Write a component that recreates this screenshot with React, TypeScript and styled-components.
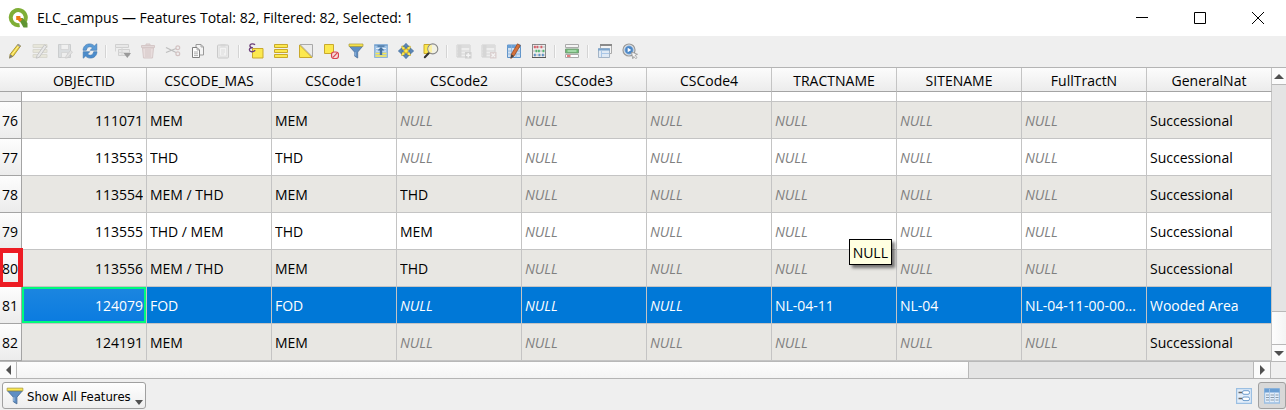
import React from "react";
import styled, { createGlobalStyle, css } from "styled-components";

const GlobalStyle = createGlobalStyle`
  *, *::before, *::after { box-sizing: border-box; }
  html, body { margin: 0; padding: 0; background: #efefef; }
  body { font-family: "Open Sans", "Noto Sans", sans-serif; font-size: 14px; color: #000; }
`;

const Window = styled.div`
  display: flex;
  flex-direction: column;
  min-height: 100vh;
  background: #efefef;
`;

const TitleBar = styled.header`
  display: flex;
  align-items: center;
  height: 36px;
  padding-left: 8px;
  background: #fff;
`;

const Title = styled.h1`
  flex: 1;
  margin: 0 0 0 9px;
  font-size: 14px;
  line-height: 20px;
  font-weight: 400;
  white-space: nowrap;
`;

const WindowControls = styled.div`
  display: flex;
`;

const WindowButton = styled.button`
  display: flex;
  align-items: center;
  justify-content: center;
  width: 58px;
  height: 34px;
  padding: 0 0 0 2px;
  border: 0;
  background: transparent;
`;

const Toolbar = styled.div`
  display: flex;
  align-items: center;
  height: 31px;
  padding: 0 0 1px 2px;
`;

const ToolButton = styled.button`
  display: flex;
  align-items: center;
  justify-content: center;
  width: 25px;
  height: 24px;
  padding: 0;
  border: 0;
  background: transparent;
  &:disabled svg { opacity: 0.35; }
`;

const Separator = styled.span`
  width: 8px;
  height: 13px;
  border-left: 3px solid transparent;
  background: linear-gradient(90deg, #d4d4d4 1px, #fafafa 1px, #fafafa 2px, transparent 2px) no-repeat;
  background-origin: padding-box;
  background-clip: padding-box;
`;

const Body = styled.div`
  display: flex;
  border-top: 1px solid #b4b4b4;
`;

const TableView = styled.div`
  flex: 1;
  min-width: 0;
  overflow: hidden;
`;

const Table = styled.table`
  width: 100%;
  table-layout: fixed;
  border-collapse: separate;
  border-spacing: 0;
  background: #fff;
`;

const NumberCol = styled.col`
  width: 22px;
`;

const HeadCell = styled.th`
  height: 24px;
  padding: 2px 0 0;
  border-right: 1px solid #c4c4c4;
  border-bottom: 1px solid #a4a4a4;
  background: linear-gradient(#fcfcfc, #ececec);
  font-weight: 400;
  line-height: 20px;
  text-align: center;
`;

const CornerCell = styled.td`
  padding: 0;
  border-bottom: 1px solid #a4a4a4;
  background: linear-gradient(#fcfcfc, #ececec);
`;

const RowHead = styled.th<{ $partial?: boolean }>`
  position: relative;
  height: ${(p) => (p.$partial ? 10 : 37)}px;
  padding: 2px 0 0 2px;
  border-right: 1px solid #a4a4a4;
  border-bottom: 1px solid #a4a4a4;
  background: ${(p) => (p.$partial ? "#ededed" : "linear-gradient(#fdfdfd, #ececec)")};
  color: #000;
  font-weight: 400;
  line-height: 20px;
  text-align: left;
`;

const RowNumber = styled.span`
  position: relative;
  z-index: 2;
`;

const RowMark = styled.span`
  position: absolute;
  inset: -2px -2px -1px 0;
  z-index: 1;
  border: 5px solid #ed1c24;
  border-left-width: 3px;
`;

const Cell = styled.td<{ $numeric?: boolean; $current?: boolean }>`
  position: relative;
  padding: 2px 3px 0;
  border-right: 1px solid #c4c4c4;
  border-bottom: 1px solid #c4c4c4;
  line-height: 20px;
  text-align: ${(p) => (p.$numeric ? "right" : "left")};
  ${(p) =>
    p.$current &&
    css`
      background: linear-gradient(#1c86e0, #0a7be0);
      box-shadow: inset 0 0 0 2px #00fa7c;
    `}
`;

const CellText = styled.span<{ $null?: boolean }>`
  display: block;
  overflow: hidden;
  white-space: nowrap;
  ${(p) =>
    p.$null &&
    css`
      color: #808080;
      font-style: italic;
    `}
`;

const Row = styled.tr<{ $shade?: boolean; $selected?: boolean }>`
  background: ${(p) => (p.$selected ? "#0078d7" : p.$shade ? "#e8e7e3" : "#fff")};
  ${(p) =>
    p.$selected &&
    css`
      ${CellText} { color: #fff; }
    `}
`;

const Tooltip = styled.span`
  position: absolute;
  top: 26px;
  right: 4px;
  z-index: 2;
  padding: 3px 3px 1px;
  border: 1px solid #000;
  background: #ffffe1;
  box-shadow: 3px 3px 3px rgba(0, 0, 0, 0.5);
`;

const VerticalBar = styled.div`
  display: flex;
  flex-direction: column;
  width: 14px;
  background: #e4e4e4;
`;

const HorizontalBar = styled.div`
  display: flex;
  height: 18px;
  padding-right: 15px;
  border-top: 1px solid #b8b8b8;
  border-bottom: 1px solid #b4b4b4;
`;

const Arrow = styled.button<{ $vertical?: boolean }>`
  display: flex;
  align-items: center;
  justify-content: center;
  flex: none;
  padding: 0;
  border: 0 solid #b8b8b8;
  background: #fbfbfb;
  ${(p) =>
    p.$vertical
      ? css`
          width: 14px;
          height: 17px;
          &:first-child { border-bottom-width: 1px; }
          &:last-child { border-top-width: 1px; }
        `
      : css`
          width: 17px;
          height: 16px;
          &:first-child { border-right-width: 1px; }
          &:last-child { border-left-width: 1px; border-right-width: 1px; width: 18px; }
        `}
`;

const Track = styled.div<{ $vertical?: boolean }>`
  display: flex;
  flex: 1;
  flex-direction: ${(p) => (p.$vertical ? "column" : "row")};
  justify-content: ${(p) => (p.$vertical ? "flex-end" : "flex-start")};
  background: #e4e4e4;
`;

const VerticalThumb = styled.div`
  height: 33px;
  border-top: 1px solid #b8b8b8;
  background: linear-gradient(90deg, #fdfdfd, #f4f4f4);
`;

const HorizontalThumb = styled.div`
  width: 77%;
  border-right: 1px solid #b8b8b8;
  background: linear-gradient(#fdfdfd, #f4f4f4);
`;

const Footer = styled.footer`
  display: flex;
  align-items: center;
  justify-content: space-between;
  padding: 3px 0 1px 2px;
`;

const FilterButton = styled.button`
  display: flex;
  align-items: center;
  gap: 3px;
  width: 144px;
  height: 27px;
  padding: 0 2px 0 3px;
  border: 1px solid #a0a0a0;
  border-radius: 3px;
  background: linear-gradient(#fefefe, #eeeeee);
  color: #000;
  font-family: "DejaVu Sans Condensed", "DejaVu Sans", sans-serif;
  font-size: 13px;
  line-height: 16px;
  white-space: nowrap;
`;

const FilterLabel = styled.span`
  padding-top: 2px;
`;

const MenuMark = styled.svg`
  align-self: flex-end;
  margin: 0 0 3px auto;
  flex: none;
`;

const ViewSwitch = styled.div`
  display: flex;
`;

const ViewButton = styled.button<{ $active?: boolean }>`
  display: flex;
  align-items: center;
  justify-content: center;
  width: 28px;
  height: 27px;
  padding: 0;
  border: 1px solid ${(p) => (p.$active ? "#a0a0a0" : "transparent")};
  border-radius: 3px;
  background: ${(p) => (p.$active ? "#d8d8d8" : "transparent")};
`;

const Icon = ({ children, size = 16 }: { children: React.ReactNode; size?: number }) => (
  <svg width={size} height={size} viewBox="0 0 16 16" fill="none" aria-hidden="true">
    {children}
  </svg>
);

const Funnel = () => (
  <>
    <path d="M1.500 3.500h13L9.700 9v6l-3.200-2V9z" fill="#5f8fc4" stroke="#4b6e99" strokeWidth="0.800" />
    <path d="M7 9.200v3.500" stroke="#a9c6e6" />
    <path d="M1 1h14v2.400H1z" fill="#fce94f" stroke="#a8993c" strokeWidth="0.700" />
  </>
);

const Trio = () => (
  <path d="M1 1.500h14v3H1zM1 6.500h14v3H1zM1 11.500h14v3H1z" fill="#d9d6b4" stroke="#b5b29a" />
);

const SheetTable = () => (
  <>
    <path d="M1 2h13v12H1z" fill="#eee" stroke="#9a9a9a" />
    <path d="M1 2h13v3H1z" fill="#bbb" />
    <path d="M5 2v12M1 8h13M1 11h13" stroke="#aaa" />
    <path d="M2 2h3v12H2z" fill="#aaa" />
  </>
);

type Tool = { label: string; off?: boolean; art: React.ReactNode };

const toolGroups: Tool[][] = [
  [
    {
      label: "Toggle editing mode",
      art: (
        <>
          <path d="M3.200 11.200 11 1.200l2.600 1.800-7.400 10.200-3.600 1.900z" fill="#f0d742" stroke="#9a8426" strokeWidth="0.800" />
          <path d="M4.600 12.200 12.200 2.200" stroke="#fff3a0" />
          <path d="m10.600 1.600 2.800 2" stroke="#9c9c9c" strokeWidth="1.800" />
          <path d="m3.100 11.200-.9 4.300 3.900-2.200z" fill="#7d7d7d" />
        </>
      ),
    },
    {
      label: "Toggle multi edit mode",
      off: true,
      art: (
        <>
          <Trio />
          <path d="m5 12.600 7.500-10.800 2.200 1.600L7.300 14.200l-3 1z" fill="#ddd" stroke="#777" />
        </>
      ),
    },
    {
      label: "Save edits",
      off: true,
      art: (
        <>
          <path d="M1.500 1.500h12v13h-12z" fill="#b4bcc4" stroke="#8b8f93" />
          <path d="M4 1.500h7.500v5H4z" fill="#f4f4f4" stroke="#999" strokeWidth="0.700" />
          <path d="M4.500 9.500h6v5h-6z" fill="#eee" stroke="#999" strokeWidth="0.700" />
          <path d="m9 13 4.500-5.500 2 1.500-4.500 5.500-2.300.7z" fill="#ccc" stroke="#888" strokeWidth="0.700" />
        </>
      ),
    },
    {
      label: "Reload the table",
      art: (
        <>
          <path d="M1 7.300C1.300 3.200 4 .900 7.600.900c2 0 3.600.8 4.700 2L14.800.800v6.500H8.200l2.300-2.400C8.500 2.900 4.800 3.500 4.300 7.300z" fill="#5a9bd6" stroke="#3a72ad" strokeWidth="0.600" />
          <path d="M15 8.700c-.3 4.100-3 6.400-6.600 6.400-2 0-3.600-.8-4.700-2l-2.500 2.100V8.700h6.600l-2.300 2.400c2 2 5.700 1.400 6.200-2.400z" fill="#4b8ccc" stroke="#3a72ad" strokeWidth="0.600" />
        </>
      ),
    },
  ],
  [
    {
      label: "Add feature",
      off: true,
      art: (
        <>
          <path d="M.5 1.500h13v3H.5zM3.500 6.500h11v6h-11z" fill="#ddd" stroke="#999" />
          <path d="M3.500 9.500h11M7 4.500v8M.5 4.500v4" stroke="#aaa" />
          <path d="M8.500 10H16l-3.700 5z" fill="#000" />
        </>
      ),
    },
    {
      label: "Delete selected features",
      off: true,
      art: (
        <>
          <path d="M2.500 5h11l-1 10h-9z" fill="#dcbcbc" stroke="#a78080" />
          <path d="M1.500 2.500h13v2h-13zM6 2.300V1h4v1.300" fill="#cbb0b0" stroke="#a78080" />
          <path d="M6 6v8M8 6v8M10 6v8" stroke="#a78080" />
        </>
      ),
    },
    {
      label: "Cut",
      off: true,
      art: (
        <>
          <path d="m1 4.500 10 5M1 9.500l10-4" stroke="#666" strokeWidth="1.300" />
          <circle cx="12.800" cy="4.800" r="1.900" stroke="#a07070" strokeWidth="1.200" />
          <circle cx="12.800" cy="10.800" r="1.900" stroke="#a07070" strokeWidth="1.200" />
        </>
      ),
    },
    {
      label: "Copy",
      art: (
        <>
          <path d="M6 1.500h5l2.500 2.500v8H6z" fill="#f4f4f4" stroke="#9a9a9a" />
          <path d="M2.500 4.500h4.500l2.500 2.500v7.500h-7z" fill="#fff" stroke="#808080" />
          <path d="M7 4.500V7h2.500M4 9h4M4 10.800h4M4 12.600h4M11 1.500V4h2.500" stroke="#9a9a9a" strokeWidth="0.800" />
        </>
      ),
    },
    {
      label: "Paste",
      off: true,
      art: (
        <>
          <rect x="2.500" y="2" width="11" height="13" rx="1" fill="#ddd" stroke="#888" />
          <path d="M4.500 4.500h7v8.500h-7z" fill="#fafafa" stroke="#bbb" strokeWidth="0.600" />
          <path d="M5.500 1h5v2.500h-5z" fill="#aaa" />
          <path d="M6 7h4M6 9h4M6 11h3" stroke="#bbb" />
        </>
      ),
    },
  ],
  [
    {
      label: "Select features using an expression",
      art: (
        <>
          <path d="M4.500 5.500h10.500V15H4.500z" fill="#fce94f" stroke="#c9a92c" />
          <path d="M7 1.800C5.500.200 1.800.500 1.900 2.700c0 1.300 1.400 1.900 3 1.900C2.800 4.600 1.200 5.300 1.400 7c.3 2.300 4 2.300 5.800.3" stroke="#6b3c78" strokeWidth="1.300" />
        </>
      ),
    },
    {
      label: "Select all",
      art: <path d="M1.500 1.500h13v3h-13zM1.500 6.500h13v3h-13zM1.500 11.500h13v3h-13z" fill="#fce94f" stroke="#c9a92c" />,
    },
    {
      label: "Invert selection",
      art: (
        <>
          <path d="M2 1.500h12.500V14z" fill="#ececec" stroke="#a9a9a9" />
          <path d="M1.500 2v12.500H14z" fill="#fce94f" stroke="#c9a92c" />
        </>
      ),
    },
    {
      label: "Deselect all features",
      art: (
        <>
          <path d="M1.500 1.500h9v9h-9z" fill="#fce94f" stroke="#c9a92c" />
          <rect x="8.500" y="9" width="7" height="6.500" rx="2.500" fill="#f7dada" stroke="#d8434e" strokeWidth="1.200" />
          <path d="m10 14.300 4-4.200" stroke="#d8434e" strokeWidth="1.200" />
        </>
      ),
    },
    { label: "Filter features using form", art: <Funnel /> },
    {
      label: "Move selection to top",
      art: (
        <>
          <path d="M1.500 1.500h13v13h-13z" fill="#9ec2e6" stroke="#8fb4da" />
          <path d="M1.500 2.500h13" stroke="#7ba4cd" />
          <path d="M2.500 10.500h11M2.500 13h11" stroke="#fce94f" strokeWidth="1.600" />
          <path d="M3 5.500h10M3 8h10" stroke="#e6f0fa" />
          <path d="M4.500 2.500h7v1.300h-7zM8 4l3.500 3.500H9.200V12H6.800V7.500H4.500z" fill="#44709f" />
        </>
      ),
    },
    {
      label: "Pan map to the selected rows",
      art: (
        <>
          <path d="M3.800 3h3.500v3.500H3.800zM9 3.200h3.300v3.300H9zM3.500 9h3.300v3.500H3.500zM9.300 9.300h3.200v3.200H9.300zM6 6h4v4H6z" fill="#fce94f" stroke="#c9a92c" strokeWidth="0.700" />
          <path d="m8 .3 3 3.300H9v1.600H7V3.600H5zM8 15.700l3-3.300H9v-1.600H7v1.600H5zM.3 8l3.300-3v2h1.600v2H3.600v2zM15.700 8l-3.300-3v2h-1.600v2h1.600v2z" fill="#5b87b8" stroke="#3f6998" strokeWidth="0.600" />
        </>
      ),
    },
    {
      label: "Zoom map to the selected rows",
      art: (
        <>
          <path d="M1 1.500h7v9H1z" fill="#fce94f" stroke="#c9a92c" />
          <path d="M5.600 10.200 1.800 14.300" stroke="#333" strokeWidth="2" strokeLinecap="round" />
          <circle cx="9.800" cy="5.900" r="5" fill="#f1f1e4" stroke="#888" strokeWidth="1.100" />
          <path d="M5.500 5.500a4.200 4.200 0 0 0 3.400 4.300V1.800a4.300 4.300 0 0 0-3.400 3.700z" fill="#fbf0a0" />
        </>
      ),
    },
  ],
  [
    {
      label: "New field",
      off: true,
      art: (
        <>
          <SheetTable />
          <rect x="9" y="9" width="6.500" height="6.500" fill="#999" />
          <path d="M12.200 10v4.500M10 12.200h4.500" stroke="#fff" strokeWidth="1.400" />
        </>
      ),
    },
    {
      label: "Delete field",
      off: true,
      art: (
        <>
          <SheetTable />
          <rect x="9" y="9" width="6.500" height="6.500" fill="#b89a9a" />
          <path d="m10.500 10.500 3.500 3.500M14 10.500 10.500 14" stroke="#fff" strokeWidth="1.300" />
        </>
      ),
    },
    {
      label: "Organize columns",
      art: (
        <>
          <path d="M1.500 2h13v12.500h-13z" fill="#cfe0f2" stroke="#5f93c8" />
          <path d="M1.500 2h13v3h-13z" fill="#6ba0d6" />
          <path d="M5.500 2v12.500M10 2v12.500M1.500 8h13M1.500 11h13" stroke="#86b0dc" strokeWidth="0.800" />
          <path d="m5.300 11.300 6.200-10.500 2.800 1.700-6.200 10.400-3.300 2.600z" fill="#d5713a" stroke="#8c4420" strokeWidth="0.700" />
          <path d="m5.200 11.300-.4 4 3.300-2.400z" fill="#444" />
        </>
      ),
    },
    {
      label: "Open field calculator",
      art: (
        <>
          <path d="M1.500 1v14M14.500 1v14M1.500 1.500h13" stroke="#888" />
          <path d="M1.500 4h13M1.500 8h13M1.500 12h13" stroke="#aaa" strokeWidth="0.800" />
          <path d="M3 4h1.800M5.500 4h1.800M9.500 4h1.800" stroke="#d9606a" strokeWidth="2.400" />
          <path d="M4.500 8h1.800M7 8h1.800M11.500 8h1.800" stroke="#55b873" strokeWidth="2.400" />
          <path d="M3 12h1.800M7.500 12h1.800M11 12h1.800" stroke="#5f93c8" strokeWidth="2.400" />
          <path d="M1 14.500h14" stroke="#555" />
        </>
      ),
    },
  ],
  [
    {
      label: "Conditional formatting",
      art: (
        <>
          <path d="M1.500 1.500h13v3h-13z" fill="#f4f4f4" stroke="#aaa" />
          <path d="M1.500 6h13v4h-13z" fill="#6dbb73" stroke="#7a9c7d" />
          <path d="M3.500 8h9" stroke="#b4e2b8" strokeWidth="1.500" />
          <path d="M1.500 11.500h13v3h-13z" fill="#fff" stroke="#aaa" />
          <path d="M3 13h3.500" stroke="#d23b3b" strokeWidth="1.300" />
        </>
      ),
    },
  ],
  [
    {
      label: "Dock attribute table",
      art: (
        <>
          <path d="M3.500 1.500h11v9h-11z" fill="#f4f4f4" stroke="#aaa" />
          <path d="M3 2h12" stroke="#8a8a8a" strokeWidth="2" />
          <path d="M1.500 5.500h11v9h-11z" fill="#dfe9f4" stroke="#a3b4c6" />
          <path d="M1 6.500h12" stroke="#7ba4cd" strokeWidth="2" />
          <path d="M4.500 8v6M5 10.500h7" stroke="#a9c6e6" />
        </>
      ),
    },
    {
      label: "Actions",
      art: (
        <>
          <circle cx="7" cy="7" r="6" fill="#e6e6e6" stroke="#9a9a9a" strokeWidth="1.200" />
          <circle cx="7" cy="7" r="4.300" fill="#4c87c6" stroke="#a9c6e6" strokeWidth="0.800" />
          <path d="m5.700 4.800 3.600 2.200-3.600 2.200z" fill="#fff" />
          <path d="m9.500 9 6 2.300-2.500 1 2 2.200-1.200 1.200-2-2.200-1 2.200z" fill="#f8f8f8" stroke="#888" strokeWidth="0.700" />
        </>
      ),
    },
  ],
];

const columns = [
  "OBJECTID",
  "CSCODE_MAS",
  "CSCode1",
  "CSCode2",
  "CSCode3",
  "CSCode4",
  "TRACTNAME",
  "SITENAME",
  "FullTractN",
  "GeneralNat",
];

type Feature = { n: number; values: (string | null)[]; selected?: boolean; marked?: boolean; tip?: number };

const blank = (count: number): null[] => Array(count).fill(null);

const features: Feature[] = [
  { n: 76, values: ["111071", "MEM", "MEM", ...blank(6), "Successional"] },
  { n: 77, values: ["113553", "THD", "THD", ...blank(6), "Successional"] },
  { n: 78, values: ["113554", "MEM / THD", "MEM", "THD", ...blank(5), "Successional"] },
  { n: 79, values: ["113555", "THD / MEM", "THD", "MEM", ...blank(5), "Successional"], tip: 6 },
  { n: 80, values: ["113556", "MEM / THD", "MEM", "THD", ...blank(5), "Successional"], marked: true },
  {
    n: 81,
    values: ["124079", "FOD", "FOD", ...blank(3), "NL-04-11", "NL-04", "NL-04-11-00-00...", "Wooded Area"],
    selected: true,
  },
  { n: 82, values: ["124191", "MEM", "MEM", ...blank(6), "Successional"] },
];

const Triangle = ({ d, w, h }: { d: string; w: number; h: number }) => (
  <svg width={w} height={h} viewBox={`0 0 ${w} ${h}`} aria-hidden="true">
    <path d={d} fill="#505050" />
  </svg>
);

export default function App() {
  return (
    <Window>
      <GlobalStyle />
      <TitleBar>
        <svg width="20" height="20" viewBox="0 0 20 20" fill="none" aria-hidden="true">
          <path d="M16.200 14.200A7.500 7.500 0 1 0 11.600 17" stroke="#7fae36" strokeWidth="4" />
          <path d="m10 10 4.500 0 5 5v4.500h-4z" fill="#5f9432" />
          <path d="M8.200 8h4.200v1.400l2 2-2.600 2.600-2-2H8.200z" fill="#ee7913" />
        </svg>
        <Title>ELC_campus — Features Total: 82, Filtered: 82, Selected: 1</Title>
        <WindowControls>
          <WindowButton aria-label="Minimize">
            <svg width="12" height="12" viewBox="0 0 12 12"><path d="M0 5.500h12" stroke="#000" /></svg>
          </WindowButton>
          <WindowButton aria-label="Maximize">
            <svg width="12" height="12" viewBox="0 0 12 12"><path d="M.5.5h11v11H.5z" fill="none" stroke="#000" /></svg>
          </WindowButton>
          <WindowButton aria-label="Close">
            <svg width="12" height="12" viewBox="0 0 12 12"><path d="m0 0 12 12M12 0 0 12" stroke="#000" /></svg>
          </WindowButton>
        </WindowControls>
      </TitleBar>

      <Toolbar role="toolbar" aria-label="Attribute table tools">
        {toolGroups.map((group, g) => (
          <React.Fragment key={g}>
            {g > 0 && <Separator />}
            {group.map((tool) => (
              <ToolButton key={tool.label} aria-label={tool.label} disabled={tool.off}>
                <Icon>{tool.art}</Icon>
              </ToolButton>
            ))}
          </React.Fragment>
        ))}
      </Toolbar>

      <Body>
        <TableView>
          <Table>
            <colgroup>
              <NumberCol />
              {columns.map((name) => (
                <col key={name} />
              ))}
            </colgroup>
            <thead>
              <tr>
                <CornerCell />
                {columns.map((name) => (
                  <HeadCell key={name} scope="col">{name}</HeadCell>
                ))}
              </tr>
            </thead>
            <tbody>
              <Row>
                <RowHead $partial />
                {columns.map((name) => (
                  <Cell key={name} />
                ))}
              </Row>
              {features.map((f, i) => (
                <Row key={f.n} $shade={i % 2 === 0} $selected={f.selected}>
                  <RowHead scope="row">
                    <RowNumber>{f.n}</RowNumber>
                    {f.marked && <RowMark />}
                  </RowHead>
                  {f.values.map((v, c) => (
                    <Cell key={c} $numeric={c === 0} $current={f.selected && c === 0}>
                      <CellText $null={v === null}>{v ?? "NULL"}</CellText>
                      {f.tip === c && <Tooltip role="tooltip">NULL</Tooltip>}
                    </Cell>
                  ))}
                </Row>
              ))}
            </tbody>
          </Table>
        </TableView>
        <VerticalBar>
          <Arrow $vertical aria-label="Scroll up"><Triangle d="M0 5 5 0l5 5z" w={10} h={5} /></Arrow>
          <Track $vertical><VerticalThumb /></Track>
          <Arrow $vertical aria-label="Scroll down"><Triangle d="M0 0h10L5 5z" w={10} h={5} /></Arrow>
        </VerticalBar>
      </Body>

      <HorizontalBar>
        <Arrow aria-label="Scroll left"><Triangle d="M5 0v10L0 5z" w={5} h={10} /></Arrow>
        <Track><HorizontalThumb /></Track>
        <Arrow aria-label="Scroll right"><Triangle d="M0 0v10l5-5z" w={5} h={10} /></Arrow>
      </HorizontalBar>

      <Footer>
        <FilterButton aria-haspopup="menu">
          <Icon size={18}><Funnel /></Icon>
          <FilterLabel>Show All Features</FilterLabel>
          <MenuMark width="8" height="5" viewBox="0 0 8 5" aria-hidden="true">
            <path d="M0 0h8L4 5z" fill="#505050" />
          </MenuMark>
        </FilterButton>
        <ViewSwitch>
          <ViewButton aria-label="Switch to form view">
            <Icon>
              <path d="M.5.5h15v15H.5z" fill="#e3eefa" stroke="#9bbfe2" strokeWidth="1.400" />
              <path d="M2.500 4.500h4M2.500 10.500h4" stroke="#666" strokeWidth="1.400" />
              <rect x="6.500" y="2.700" width="7" height="3.600" rx="1.500" fill="#fff" stroke="#6d9ccc" />
              <rect x="6.500" y="9" width="7" height="3.600" rx="1.500" fill="#fff" stroke="#6d9ccc" />
            </Icon>
          </ViewButton>
          <ViewButton $active aria-label="Switch to table view" aria-pressed="true">
            <Icon>
              <path d="M.5 1h15v14H.5z" fill="#e3eefa" stroke="#9bbfe2" strokeWidth="1.400" />
              <path d="M.5.5h15v4H.5z" fill="#6b9fd4" />
              <path d="M5.500 1v14M10.500 4v11" stroke="#a9c8e8" strokeWidth="0.800" />
              <path d="M2 7h3M6.500 7h3.500M11.500 7h3M2 9.500h3M6.500 9.500h3.500M11.500 9.500h3M2 12h3M6.500 12h3.500M11.500 12h3" stroke="#8a9aaa" />
            </Icon>
          </ViewButton>
        </ViewSwitch>
      </Footer>
    </Window>
  );
}
